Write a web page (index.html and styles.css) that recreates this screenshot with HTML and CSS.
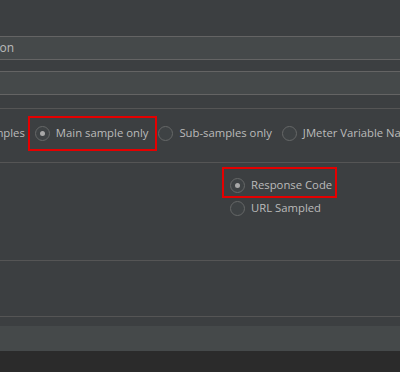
FILE: index.html
```html
<!DOCTYPE html>
<html lang="en">
<head>
    <meta charset="UTF-8">
    <meta name="viewport" content="width=device-width, initial-scale=1.0">
    <title>Sampler options</title>
    <link rel="stylesheet" href="styles.css">
</head>
<body>
    <div class="top-space"></div>

    <div class="field"><span class="field-text">Transaction</span></div>
    <div class="field-gap"></div>
    <div class="field"></div>
    <div class="field-gap2"></div>

    <!-- apply to -->
    <div class="section scope">
        <div class="radio-row">
            <label class="radio"><span class="circle"></span>Main sample and sub-samples</label>
            <span class="mark mark-main">
                <label class="radio"><span class="circle checked"></span>Main sample only</label>
            </span>
            <label class="radio"><span class="circle"></span>Sub-samples only</label>
            <label class="radio"><span class="circle"></span>JMeter Variable Name to use</label>
        </div>
    </div>

    <!-- field to check -->
    <div class="section fieldcheck">
        <div class="radio-col">
            <span class="mark mark-code">
                <label class="radio"><span class="circle checked"></span>Response Code</label>
            </span>
            <label class="radio"><span class="circle"></span>URL Sampled</label>
        </div>
    </div>

    <div class="section empty"></div>

    <div class="bottom-gap"></div>
    <div class="bottom-bar"></div>
    <div class="status"></div>
</body>
</html>
```

FILE: styles.css
```css
body {
    margin: 0;
    background-color: #3c3f41;
    color: #bbbbbb;
    font-family: "Open Sans", "DejaVu Sans", sans-serif;
    font-size: 11.3px;
    overflow: hidden;
    height: 372px;
}

.top-space {
    height: 36px;
}
.field {
    height: 22px;
    border-top: 1px solid #646464;
    border-bottom: 1px solid #646464;
    background-color: #45494a;
    line-height: 22px;
    white-space: nowrap;
    overflow: hidden;
}
.field-text {
    display: inline-block;
    width: 100px;
    margin-left: -86px;
    text-align: right;
    font-size: 12px;
}
.field-gap {
    height: 11px;
}
.field-gap2 {
    height: 13px;
}

.section {
    border-top: 1px solid #555555;
}
.scope {
    height: 53px;
    overflow: hidden;
}
.fieldcheck {
    height: 97px;
}
.empty {
    height: 55px;
    border-bottom: 1px solid #555555;
}

.radio-row {
    display: flex;
    align-items: center;
    gap: 10px;
    margin-left: -156px;
    padding-top: 16px;
    white-space: nowrap;
}
.radio-col {
    display: flex;
    flex-direction: column;
    align-items: flex-start;
    gap: 7px;
    padding-top: 14px;
    padding-left: 230px;
}

.radio {
    display: flex;
    align-items: center;
    gap: 6px;
    height: 16px;
    line-height: 16px;
}
.circle {
    width: 13px;
    height: 13px;
    border: 1px solid #666868;
    border-radius: 50%;
    background-color: #3e4244;
    display: flex;
    align-items: center;
    justify-content: center;
    flex-shrink: 0;
}
.circle.checked::after {
    content: "";
    width: 5px;
    height: 5px;
    border-radius: 50%;
    background-color: #a8a8a8;
}

/* red highlight boxes */
.mark {
    border: 2px solid #e50000;
}
.mark-main {
    padding: 7px 7px 8px 5px;
    margin: -9px -9px -10px -7px;
}
.mark-code {
    padding: 8px 3px 3px 6px;
    margin: -10px -5px -5px -8px;
}

.bottom-gap {
    height: 9px;
}
.bottom-bar {
    height: 25px;
    background-color: #45494a;
}
.status {
    height: 21px;
    background-color: #2b2b2b;
}
```
